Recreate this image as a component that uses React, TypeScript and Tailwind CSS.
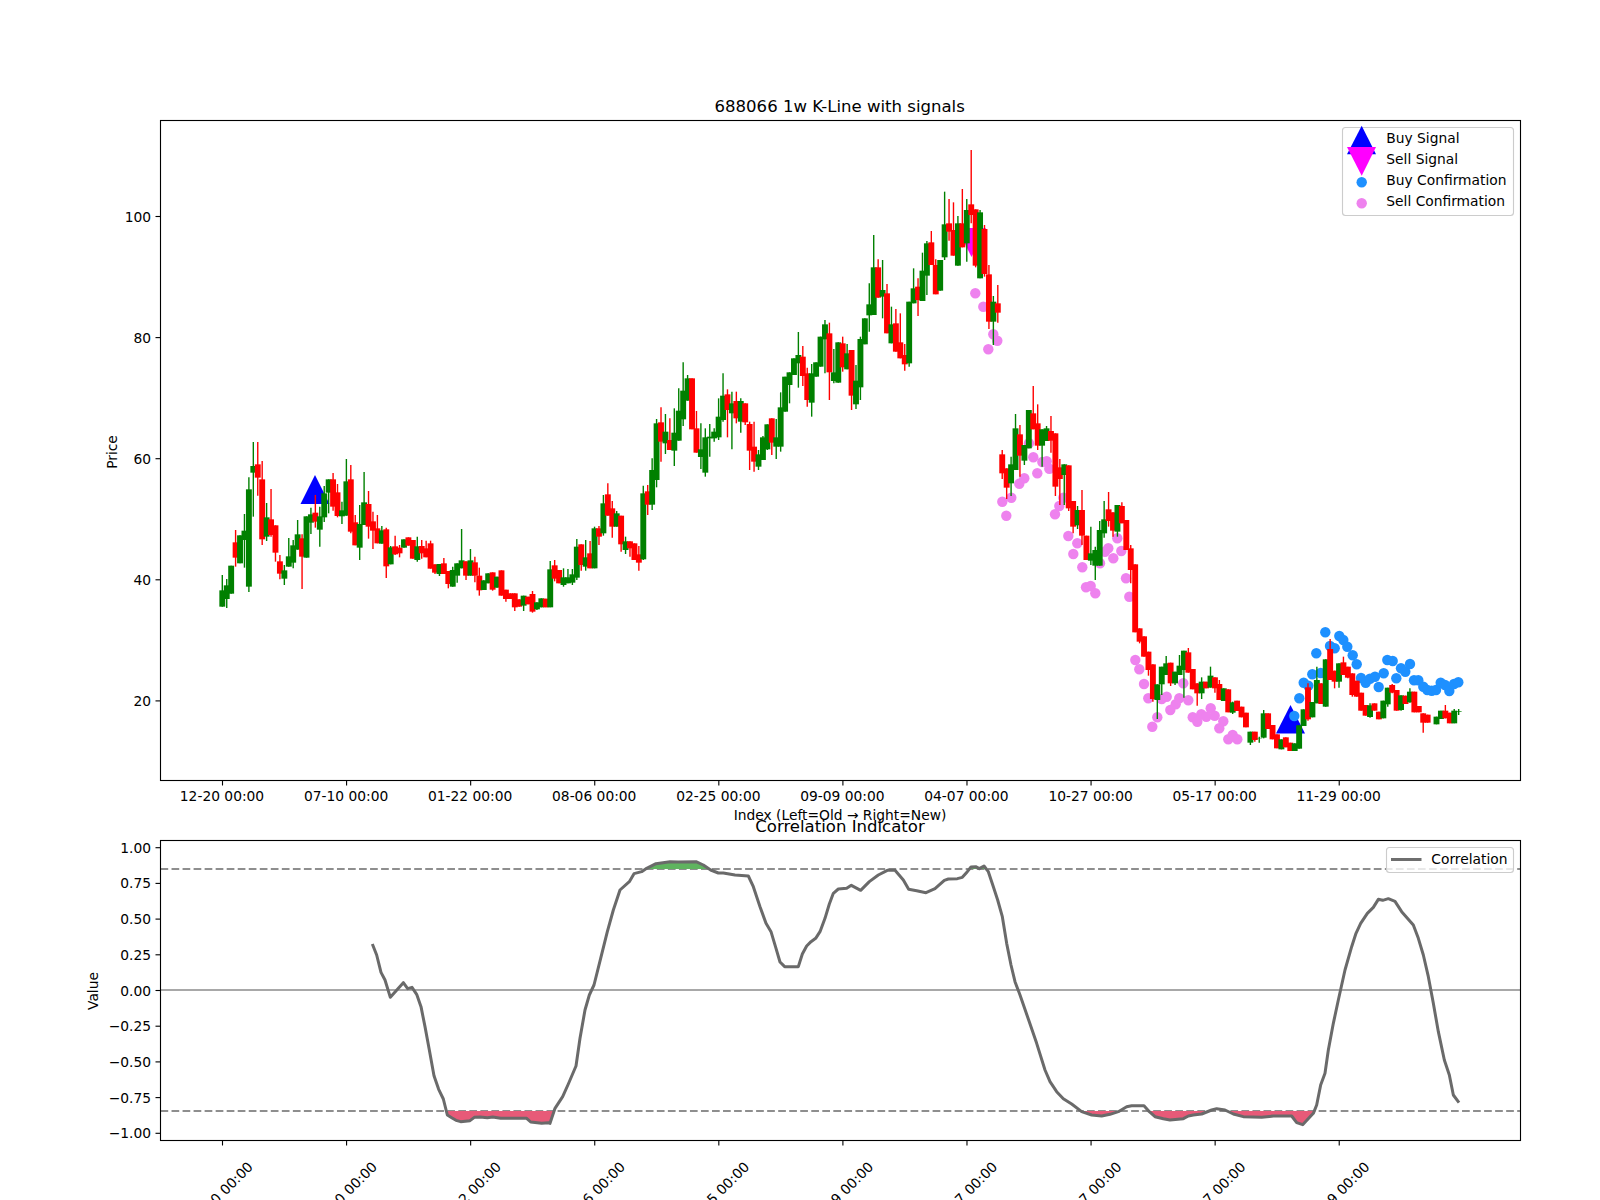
// 688066 weekly K-line chart and correlation indicator, values read off the plot in page pixels

type Row = [number, number, number, number, number] // colour (0 green, 1 red), body top, body bottom, wick top, wick bottom

const CANDLE_STEP = 4.4314
const candleX = (i: number) => 222.3 + CANDLE_STEP * i
const TICK_XS = Array.from({length: 10}, (_, k) => 222.5 + 124.08 * k)
const TICK_LABELS = ['12-20 00:00', '07-10 00:00', '01-22 00:00', '08-06 00:00', '02-25 00:00', '09-09 00:00', '04-07 00:00', '10-27 00:00', '05-17 00:00', '11-29 00:00']

const SEGMENTS: {y0: number; from: number; rows: Row[]}[] = [
    {y0: 400, from: 0, rows: [
        [0,571,620,525,620],[0,556,597,537,624],[0,497,581,497,581],[1,427,473,390,500],[0,406,490,406,490],
        [0,392,420,342,503],[0,268,560,232,576],[0,198,218,126,350],[1,193,233,126,287],[1,238,418,183,435],
        [0,352,410,309,423],[1,358,405,267,410],[1,376,458,376,485],[1,484,521,465,538],[0,511,536,495,555],
        [0,469,500,414,500],[0,436,488,420,505],[0,403,449,360,449],[1,415,470,403,567],[0,349,473,349,473],
        [0,343,368,323,402],[1,338,365,285,383],[0,349,389,320,440],[0,280,352,258,366],[0,238,278,238,340],
        [1,238,320,219,332],[1,277,348,252,352],[0,331,349,305,372],[0,244,347,177,347],[1,238,395,195,400],
        [1,367,436,345,436],[0,372,443,315,480],[0,307,375,216,375],[1,312,380,273,416],[1,364,392,335,447],
        [1,385,430,345,430],[0,391,431,378,431],[1,388,499,383,534],[0,442,493,438,493],[1,439,463,407,465],
        [1,443,460,435,472],[0,418,443,418,443],[1,412,437,412,437],[1,420,476,420,476],[0,439,480,410,485],
        [1,438,460,420,476],[1,445,472,422,472],[1,430,506,422,506],[1,493,518,493,522],[0,492,522,492,528],
        [1,490,522,474,522],[1,513,552,513,565],[0,510,560,500,560],[0,490,527,490,548],[0,481,505,387,505],
        [1,484,527,484,540],[0,481,527,447,527],[1,487,527,470,547],[1,527,571,503,587],[0,541,570,541,570],
        [0,520,550,520,550],[1,517,569,517,572],[0,530,563,530,563],[1,511,587,511,587],[1,569,597,569,605],
        [1,580,597,580,597],[1,580,622,580,633],[1,598,620,598,620],[0,587,617,587,633],[1,590,613,590,613],
        [1,582,635,573,638],[0,607,628,607,630],[0,595,622,595,622],[1,596,622,596,622],[0,508,622,483,622],
    ]},
    {y0: 420, from: 75, rows: [
        [1,436,476,420,484],[1,450,490,450,490],[0,472,495,445,500],[0,472,490,447,490],[0,463,488,447,495],
        [0,380,473,357,480],[1,373,435,373,452],[0,412,440,360,452],[1,400,445,363,445],[0,325,445,320,445],
        [1,325,350,318,375],[0,250,340,225,347],[1,223,287,190,287],[1,265,320,243,353],[0,280,320,273,320],
        [1,287,373,287,395],[0,364,390,350,402],[1,364,385,364,410],[1,370,420,370,420],[1,403,428,378,452],
        [0,220,418,197,420],[1,214,254,195,285],[0,150,254,115,270],
    ]},
    {y0: 130, from: 98, rows: [
        [0,880,1050,867,1072],[1,877,935,832,995],[0,905,940,852,972],[1,930,960,865,960],[0,908,962,835,1008],
        [0,842,932,775,932],[0,782,868,697,888],[0,745,812,735,812],[1,745,898,745,898],[1,895,968,843,968],
        [0,958,981,880,1017],[0,922,1028,895,1040],[0,920,925,882,980],[0,905,925,895,935],[0,860,922,805,930],
        [0,797,870,730,875],[1,793,840,778,922],[0,820,850,785,958],[1,813,865,785,880],[0,813,875,805,908],
        [1,820,877,820,885],[1,882,962,875,1020],[1,950,995,875,1025],[0,973,1010,960,1020],[0,922,990,918,990],
        [0,883,958,883,960],[1,865,938,865,975],[0,922,950,867,987],[0,832,950,787,965],[0,740,845,740,845],
        [0,727,765,727,820],[0,685,735,685,735],[0,675,700,606,773],[1,680,738,648,768],[1,730,810,713,830],
        [0,730,818,702,860],[0,697,740,697,740],[0,620,710,620,710],[0,583,628,570,730],[1,610,727,578,810],
        [0,727,753,657,760],[0,637,758,637,758],[1,640,712,620,725],[0,670,718,642,718],[1,660,797,660,840],
        [0,752,823,705,837],[0,627,772,620,810],[0,565,643,565,643],[0,523,556,460,605],[0,412,555,315,555],
        [1,412,503,388,503],[0,480,500,390,565],[1,490,610,462,610],[0,583,640,530,640],[1,580,665,537,665],
        [1,637,685,550,685],[1,675,703,642,722],[0,515,700,515,710],[0,475,520,415,520],[1,470,510,445,558],
        [0,422,513,368,513],[0,340,437,333,495],[1,337,405,303,405],[1,405,493,388,493],[0,390,482,390,482],
        [0,283,382,185,390],[1,280,305,207,332],[1,300,377,217,377],[0,280,407,258,407],[1,280,352,177,352],
        [0,240,340,207,395],[1,223,255,60,280],[1,238,407,238,412],[0,247,445,240,445],[1,297,432,285,440],
        [1,433,575,405,597],[0,515,575,498,645],[1,520,548,465,578],
    ]},
    {y0: 260, from: 176, rows: [
        [1,583,640,570,657],[1,625,683,625,717],[0,613,670,590,708],[0,505,630,462,630],[1,523,587,495,650],
        [0,555,602,555,615],[0,450,565,450,565],[1,460,508,378,508],[1,490,557,433,570],[0,508,557,508,620],
        [0,505,543,498,543],[1,513,542,468,578],[1,520,680,520,708],[1,622,657,597,735],[0,613,645,613,735],
        [1,616,745,616,753],[1,723,800,723,820],[0,750,796,738,807],[1,750,827,690,855],[1,827,900,827,900],
        [0,880,902,800,915],[0,870,917,860,960],[0,810,917,783,917],[0,778,820,723,833],[1,748,783,696,800],
        [1,757,812,757,830],[0,735,815,735,830],[1,738,790,727,790],[1,780,870,780,870],
    ]},
    {y0: 520, from: 205, rows: [
        [1,85,150,75,190],[1,133,337,133,337],[1,325,365,325,370],[1,349,410,349,410],[1,395,450,395,467],
        [1,433,537,433,545],[0,493,540,493,597],[0,440,493,440,525],[0,430,465,408,465],[1,428,490,428,498],
        [0,455,490,455,495],[0,437,465,405,465],[0,392,450,392,533],[1,397,458,384,458],[1,447,508,447,508],
        [1,490,520,490,557],[0,485,520,472,537],[1,485,505,485,505],[0,467,503,440,503],[1,472,505,472,518],
        [1,492,540,480,540],[0,505,543,505,543],[1,508,577,508,577],[0,547,578,545,582],[1,542,573,542,573],
        [1,560,592,560,592],[1,578,622,578,622],[0,635,668,635,675],[1,635,660,635,665],[0,655,656,650,668],
        [0,580,653,570,655],
    ]},
    {y0: 540, from: 236, rows: [
        [1,520,567,520,567],[1,555,598,555,598],[1,583,625,583,625],[0,598,628,598,628],[1,592,622,592,622],
        [1,608,633,608,633],[0,610,633,610,633],[0,556,626,556,626],[0,508,558,508,558],[1,442,538,430,542],
        [0,486,532,486,532],[0,420,490,380,490],[1,430,492,430,492],[0,358,500,358,500],[1,327,420,297,420],
        [1,392,425,392,445],[0,370,425,370,443],[1,367,405,350,405],[1,380,413,380,415],[1,400,465,400,470],
        [1,422,470,422,470],[1,458,512,458,512],[1,495,527,495,527],[0,496,531,490,533],[1,490,512,490,512],
        [1,515,538,515,538],[0,482,535,482,535],[0,443,493,443,500],[1,435,458,432,460],[1,450,512,450,512],
        [0,466,510,466,512],[1,467,492,467,492],[0,455,487,445,488],[1,455,517,455,517],[1,498,517,498,517],
        [1,520,548,520,578],[1,524,548,524,548],[0,0,0,0,0],[0,530,553,530,553],[0,512,537,512,537],
        [1,512,535,495,535],[1,518,550,518,550],[0,512,550,507,550],[0,514,516,507,525],
    ]},
]

const CANDLES = SEGMENTS.flatMap(seg => seg.rows.map((r, k) => ({
    i: seg.from + k,
    up: r[0] === 0,
    top: seg.y0 + r[1] / 3,
    bottom: seg.y0 + r[2] / 3,
    wickTop: seg.y0 + r[3] / 3,
    wickBottom: seg.y0 + r[4] / 3,
}))).filter(c => c.bottom > c.top)

const SELL_DOTS = [
    [975.3,293.3],[983.3,306.7],[993.3,334.3],[997.3,340.7],[988.3,349.3],[1002.3,501.7],[1006.3,515.7],[1011.3,497.7],
    [1019.3,483.7],[1024.3,478.3],[1029,443.3],[1037.3,473.3],[1033.3,457.3],[1042.3,462],[1046.7,461.3],[1049.3,468.7],
    [1055,514.3],[1059.3,506],[1063.3,497.7],[1068.3,536],[1077.3,543.3],[1073.3,554],[1082.3,567.3],[1086,587.3],
    [1090.7,586],[1095.3,593.3],[1100,563.3],[1105,551.7],[1108.3,548.3],[1113.3,558.3],[1117.3,538.3],[1121.3,551],
    [1126,578.3],[1129.3,596.7],[1135.3,660],[1139.3,669.3],[1144,684],[1148.3,698.3],[1157.3,717.3],[1152.3,726.7],
    [1161.7,699],[1166.7,696.7],[1170.3,710],[1175.7,704.3],[1179.3,698.3],[1183.3,683.3],[1188.3,700.3],[1192.7,717.3],
    [1197.3,721.7],[1201.3,714.3],[1206.3,716.7],[1210.7,708.3],[1214.7,715.7],[1223.3,721.3],[1219.3,728.3],[1228.3,739.3],
    [1232.7,735],[1237.3,739.3],
]

const BUY_DOTS = [
    [1294.3,716],[1299.3,698.3],[1303.7,682.7],[1308.3,685.7],[1312.3,674.3],[1316.3,653.3],[1320.7,673],[1325.3,632.3],
    [1330,646],[1334.7,648.3],[1339.3,636],[1343.3,640],[1347.3,646.7],[1352.7,655.3],[1356.7,664.3],[1361,678],
    [1365.7,682.7],[1370,678.7],[1375,676.7],[1378.7,687],[1383.7,673.3],[1387.3,660],[1392.7,661],[1396.3,678.3],
    [1401,668.3],[1405.3,671.7],[1410,664],[1414,680.3],[1418.3,680.3],[1423.3,686.7],[1427.3,690],[1431.7,690.7],
    [1436,690],[1440.7,682.7],[1445,685],[1449.3,691],[1454,684],[1458.3,682.3],
]

// correlation line, one list per crop: [x0, y0, points scaled 3x]
const CORR_CROPS: [number, number, number[][]][] = [
    [80, 770, [[877,522],[890,555],[903,607],[915,630],[931,682],[970,638],[983,656],[996,652],[1010,673],[1023,710],[1035,770],[1048,840],[1062,917],[1076,958],[1090,987],[1102,1035],[1115,1043],[1128,1051],[1142,1055],[1170,1052],[1183,1042],[1200,1041],[1222,1043],[1238,1041],[1262,1045],[1340,1045],[1352,1056],[1385,1060],[1405,1058]]],
    [550, 830, [[0,880],[15,835],[38,800],[55,762],[78,708],[90,625],[105,540],[118,495],[132,465],[152,385],[172,305],[190,240],[210,180],[238,155],[252,131],[275,125],[290,115],[318,101],[360,95],[385,96],[438,95],[460,105],[482,120],[505,129],[520,129],[555,135],[595,138],[610,170],[630,230],[648,280],[663,305],[678,355],[690,396],[704,410],[745,410],[757,372],[770,348],[783,335],[797,325],[810,305],[825,265],[838,222],[850,190],[865,177],[890,175],[904,166],[932,181],[958,155],[985,135],[1012,121],[1035,121],[1060,150],[1076,178],[1100,182],[1128,188],[1155,176],[1183,151],[1195,147],[1222,146],[1237,142],[1252,125],[1263,111],[1277,110],[1288,116],[1302,108],[1315,125],[1330,170],[1343,210],[1357,260],[1370,340],[1383,405],[1395,455],[1410,495],[1436,570]]],
    [1030, 830, [[20,640],[45,720],[60,755],[80,785],[100,806],[125,822],[155,845],[185,855],[215,858],[240,853],[265,845],[290,830],[305,827],[342,827],[358,845],[375,860],[400,866],[420,870],[460,866],[475,858],[490,855],[515,852],[545,840],[560,836],[585,840],[610,852],[640,860],[695,862],[730,858],[785,858],[800,878],[818,884],[850,850],[860,825],[872,765],[885,730],[895,660],[910,580],[925,510],[945,420],[965,350],[978,310],[992,280],[1012,250],[1030,232],[1045,208],[1058,211],[1075,206],[1095,214],[1115,245],[1150,285],[1165,325],[1180,375],[1195,440],[1210,520],[1225,605],[1243,690],[1258,735],[1270,795],[1287,818]]],
]

const CORR_POINTS = CORR_CROPS.flatMap(([x0, y0, pts]) => pts.map(([x, y]) => [x0 + x / 3, y0 + y / 3]))
const corrPath = CORR_POINTS.map(p => p.join(',')).join(' ')
const corrFill = (y: number) => `${corrPath} ${CORR_POINTS[CORR_POINTS.length - 1][0]},${y} ${CORR_POINTS[0][0]},${y}`

const PRICE_TICKS = [[100, 216.5], [80, 337.6], [60, 458.7], [40, 579.8], [20, 700.9]]
const VALUE_TICKS = ['1.00', '0.75', '0.50', '0.25', '0.00', '−0.25', '−0.50', '−0.75', '−1.00']

const LABEL = "fill-black font-['DejaVu_Sans',sans-serif] text-[13.82px]"
const TITLE = "fill-black font-['DejaVu_Sans',sans-serif] text-[16.55px]"

function PriceChart() {
    return (
        <svg viewBox="0 0 1600 816" className="block w-[1600px] h-[816px] overflow-visible shrink-0">
            <text x="839.7" y="112" textAnchor="middle" className={TITLE}>688066 1w K-Line with signals</text>

            <polygon points="315,475 300.5,504 329.5,504" fill="#0000ff" />
            <polygon points="1290.5,705 1276,733.5 1305,733.5" fill="#0000ff" />
            <polygon points="971.5,257 957,228 986,228" fill="#ff00ff" />

            {SELL_DOTS.map(([x, y], k) => <circle key={k} cx={x} cy={y} r="5.2" fill="#ee82ee" />)}
            {BUY_DOTS.map(([x, y], k) => <circle key={k} cx={x} cy={y} r="5.2" fill="#1e90ff" />)}

            {CANDLES.map(c => {
                const x = candleX(c.i)
                const color = c.up ? '#008000' : '#ff0000'
                return (
                    <g key={c.i} fill={color} stroke={color}>
                        <line x1={x} x2={x} y1={c.wickTop} y2={c.wickBottom} strokeWidth="1.4" />
                        <rect x={x - 2.95} y={c.top} width="5.9" height={c.bottom - c.top} stroke="none" />
                    </g>
                )
            })}

            <rect x="160.5" y="120.5" width="1360" height="660" fill="none" stroke="#000" strokeWidth="1.11" />

            {TICK_XS.map((x, k) => (
                <g key={k}>
                    <line x1={x} x2={x} y1="780.5" y2="785.5" stroke="#000" strokeWidth="1.11" />
                    <text x={x - 0.5} y="801" textAnchor="middle" className={LABEL}>{TICK_LABELS[k]}</text>
                </g>
            ))}
            {PRICE_TICKS.map(([v, y]) => (
                <g key={v}>
                    <line x1="155.5" x2="160.5" y1={y} y2={y} stroke="#000" strokeWidth="1.11" />
                    <text x="151" y={y + 5} textAnchor="end" className={LABEL}>{v}</text>
                </g>
            ))}

            <text x="840" y="820" textAnchor="middle" className={LABEL}>Index (Left=Old → Right=New)</text>
            <text x="117" y="452" textAnchor="middle" transform="rotate(-90 117 452)" className={LABEL}>Price</text>

            {/* legend */}
            <rect x="1342.5" y="127.5" width="171" height="88" rx="3" fill="#ffffff" fillOpacity="0.8" stroke="#cccccc" strokeWidth="1.11" />
            <polygon points="1361.7,125.7 1347,154.3 1376,154.3" fill="#0000ff" />
            <polygon points="1361.7,175.7 1347,147 1376,147" fill="#ff00ff" />
            <circle cx="1361.7" cy="182.3" r="5.2" fill="#1e90ff" />
            <circle cx="1361.7" cy="203.3" r="5.2" fill="#ee82ee" />
            <text x="1386.3" y="143" className={LABEL}>Buy Signal</text>
            <text x="1386.3" y="164" className={LABEL}>Sell Signal</text>
            <text x="1386.3" y="185" className={LABEL}>Buy Confirmation</text>
            <text x="1386.3" y="206" className={LABEL}>Sell Confirmation</text>
        </svg>
    )
}

function CorrelationChart() {
    return (
        <svg viewBox="0 816 1600 384" className="block w-[1600px] h-[384px] overflow-hidden shrink-0">
            <defs>
                <clipPath id="belowLow"><rect x="160" y="1111" width="1360" height="29" /></clipPath>
                <clipPath id="aboveHigh"><rect x="160" y="840" width="1360" height="29" /></clipPath>
            </defs>

            <line x1="160.5" x2="1520.5" y1="869" y2="869" stroke="#8e8e8e" strokeWidth="2.08" strokeDasharray="7.7 3.33" />
            <line x1="160.5" x2="1520.5" y1="1111" y2="1111" stroke="#8e8e8e" strokeWidth="2.08" strokeDasharray="7.7 3.33" />
            <line x1="160.5" x2="1520.5" y1="990" y2="990" stroke="#a8a8a8" strokeWidth="2.08" />

            <polygon points={corrFill(1111)} fill="#e75a78" clipPath="url(#belowLow)" />
            <polygon points={corrFill(869)} fill="#5fb45f" clipPath="url(#aboveHigh)" />
            <polyline points={corrPath} fill="none" stroke="#6a6a6a" strokeWidth="3" strokeLinejoin="round" />

            <rect x="160.5" y="840.5" width="1360" height="300" fill="none" stroke="#000" strokeWidth="1.11" />

            {TICK_XS.map((x, k) => (
                <g key={k}>
                    <line x1={x} x2={x} y1="1140.5" y2="1145.5" stroke="#000" strokeWidth="1.11" />
                    <text x={x + 1.5} y="1197.5" textAnchor="middle" transform={`rotate(-45 ${x + 1.5} 1197.5)`} className={LABEL}>{TICK_LABELS[k]}</text>
                </g>
            ))}
            {VALUE_TICKS.map((v, k) => {
                const y = 847.7 + 35.7 * k
                return (
                    <g key={v}>
                        <line x1="155.5" x2="160.5" y1={y} y2={y} stroke="#000" strokeWidth="1.11" />
                        <text x="151" y={y + 5} textAnchor="end" className={LABEL}>{v}</text>
                    </g>
                )
            })}

            <text x="840" y="831.5" textAnchor="middle" className={TITLE}>Correlation Indicator</text>
            <text x="98" y="991" textAnchor="middle" transform="rotate(-90 98 991)" className={LABEL}>Value</text>

            {/* legend */}
            <rect x="1386.5" y="847.5" width="127" height="25" rx="3" fill="#ffffff" fillOpacity="0.8" stroke="#cccccc" strokeWidth="1.11" />
            <line x1="1391" x2="1421.5" y1="859.5" y2="859.5" stroke="#6e6e6e" strokeWidth="3" />
            <text x="1431.3" y="864" className={LABEL}>Correlation</text>
        </svg>
    )
}

export default function App() {
    return (
        <div className="flex flex-col w-[1600px] h-[1200px] bg-white overflow-hidden">
            <PriceChart />
            <CorrelationChart />
        </div>
    )
}
